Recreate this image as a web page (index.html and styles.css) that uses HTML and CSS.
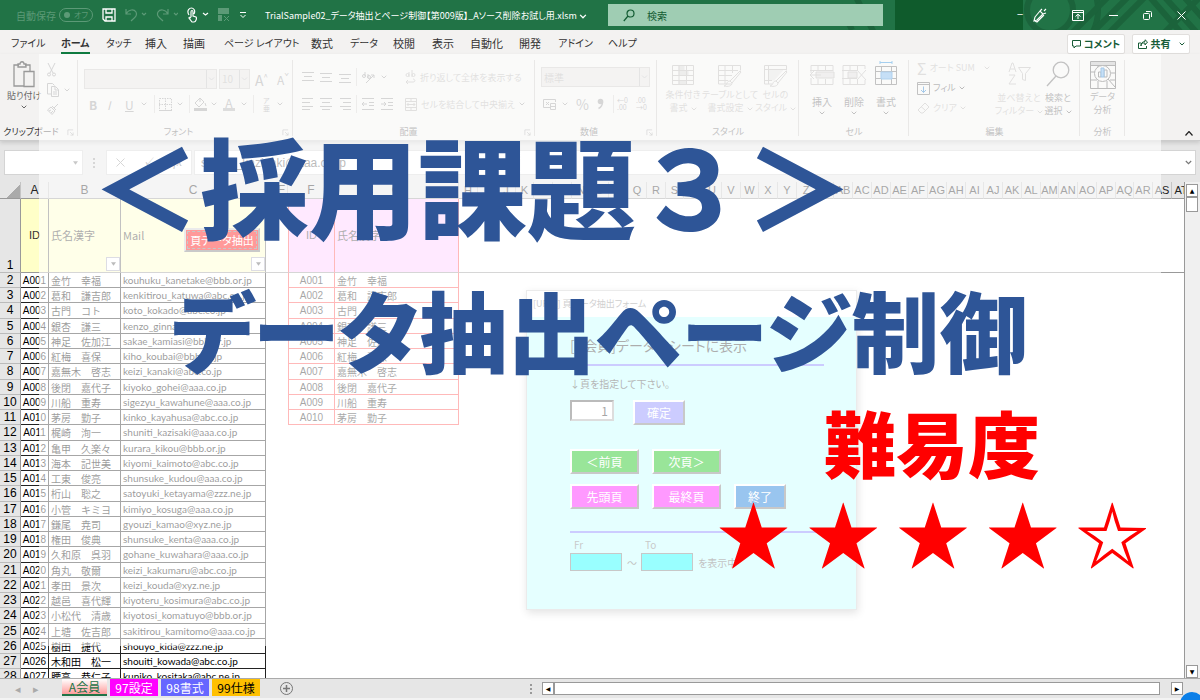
FILE: index.html
```html
<!DOCTYPE html>
<html lang="ja">
<head>
<meta charset="utf-8">
<title>採用課題３ データ抽出ページ制御</title>
<link rel="stylesheet" href="styles.css">
</head>
<body>
<svg class="defs" aria-hidden="true">
  <symbol id="chev" viewBox="0 0 6 4"><path d="M.7.7 3 3 5.3.7" fill="none" stroke="currentColor"/></symbol>
  <symbol id="launch" viewBox="0 0 8 8"><path d="M1 7V1h6M3.500 3.500 7 7M7 4v3H4" fill="none" stroke="currentColor" stroke-width=".8"/></symbol>
  <symbol id="tri" viewBox="0 0 6 4"><path d="M0 0h6L3 4z" fill="currentColor"/></symbol>
</svg>
<div class="app">
  <header class="titlebar">
    <svg class="pattern" viewBox="0 0 360 30" aria-hidden="true"><g fill="none" stroke="#1b633b" stroke-width="6"><circle cx="210" cy="10" r="23"/><circle cx="210" cy="10" r="48" /><path d="m15-5 20 40M0 5l12 25M230 35l45-45M245 40l45-45M262 40l45-45M308-5l35 40M320-8l40 44M338-10l30 34M325 32l45-45"/></g></svg>
    <div class="quick">
      <span class="dim">自動保存</span>
      <span class="dim toggle">オフ</span>
      <svg width="14" height="14" viewBox="0 0 14 14" fill="none" stroke="#fff" stroke-width="1.300"><path d="M1 1h12v12H3L1 11zM4 1v4h6V1M4 13V9h6v4"/></svg>
      <svg class="dim" width="22" height="14" viewBox="0 0 22 14" fill="none" stroke="currentColor" stroke-width="1.200"><path d="M1 1v5h5M1 6c3-5 8-5 10-2 2 4-2 6-5 9M17 5l2 2 2-2"/></svg>
      <svg class="dim" width="22" height="14" viewBox="0 0 22 14" fill="none" stroke="currentColor" stroke-width="1.200"><path d="M12 1v5H7M12 6C9 1 4 1 2 4c-2 4 2 6 5 9M18 5l2 2 2-2"/></svg>
      <svg width="22" height="16" viewBox="0 0 22 16" fill="none" stroke="#fff" stroke-width="1.200"><path d="M2 8C-1 3 3 1 4.500 1S9 3 7 7M4 10V5c0-2 2-2 2 0v4l3 1c1 1 0 5-2 5H5L2 11c0-1 1-1 2 0M16 6l2.500 2L21 6"/></svg>
      <svg class="dim" width="12" height="14" viewBox="0 0 12 14"><path d="M0 0h11v6H0zM0 7h4v6H0z" fill="currentColor"/><path d="m6 8 5 5m0-5-5 5" stroke="currentColor"/></svg>
      <svg width="8" height="8" viewBox="0 0 8 8" fill="none" stroke="#fff"><path d="M1 1.500h6M1.500 4 4 6.500 6.500 4"/></svg>
    </div>
    <div class="filename">TrialSample02_データ抽出とページ制御【第009版】_Aソース削除お試し用.xlsm <svg width="8" height="5"><use href="#chev"/></svg></div>
    <label class="search"><svg width="12" height="13" viewBox="0 0 12 13" fill="none" stroke="#135c33" stroke-width="1.200"><circle cx="7.500" cy="4.500" r="3.500"/><path d="M5 7 .8 12"/></svg><input type="text" aria-label="検索" placeholder="検索"></label>
    <div class="account">−</div>
    <div class="winbtns">
      <button aria-label="ペン"><svg width="14" height="15" viewBox="0 0 14 15" fill="none" stroke="#fff" stroke-width="1.100"><path d="m2 9 5-6 3 3-6 6-3 1zM7 3l2-2M10 6l3-1M2 13l2 1 7-7M11 3l2-2"/></svg></button>
      <button aria-label="リボン表示"><svg width="12" height="11" viewBox="0 0 12 11" fill="none" stroke="#fff"><path d="M.5.5h11v10H.5zM.5 2.500h11M6 9V4.500M3.500 6.500 6 4.200l2.500 2.300"/></svg></button>
      <button aria-label="最小化"><svg width="9" height="9" viewBox="0 0 9 9"><path d="M0 4.500h9" stroke="#fff"/></svg></button>
      <button aria-label="元に戻す"><svg width="9" height="9" viewBox="0 0 9 9" fill="none" stroke="#fff"><rect x=".5" y="2.500" width="6" height="6" rx="1"/><path d="M3 .5h4.500q1 0 1 1V6"/></svg></button>
      <button aria-label="閉じる"><svg width="9" height="9" viewBox="0 0 9 9"><path d="m.5.5 8 8m0-8-8 8" stroke="#fff"/></svg></button>
    </div>
  </header>

  <nav class="tabs">
    <a href="#" class="kana">ファイル</a><a href="#" class="active kana">ホーム</a><a href="#" class="kana">タッチ</a><a href="#">挿入</a><a href="#">描画</a><a href="#" class="kana">ページ レイアウト</a><a href="#">数式</a><a href="#" class="kana">データ</a><a href="#">校閲</a><a href="#">表示</a><a href="#">自動化</a><a href="#">開発</a><a href="#" class="kana">アドイン</a><a href="#" class="kana">ヘルプ</a>
    <div class="tabactions">
      <button><svg width="9" height="9" viewBox="0 0 9 9" fill="none" stroke="currentColor"><path d="M.5.500h8v5.500H4L2 8V6H.5z"/></svg>コメント</button>
      <button><svg width="10" height="10" viewBox="0 0 10 10" fill="none" stroke="currentColor"><path d="M3 4H.5v5.500h8V7M3 7c0-3 2-3 4-3v2l2.500-3L7 .8v1.700C4 3 3 4 3 7z"/></svg>共有 <svg class="gap" width="6" height="4"><use href="#chev"/></svg></button>
    </div>
  </nav>

  <section class="ribbon">
    <div class="group g-clip">
      <div class="gbody">
        <button class="big on"><svg width="22" height="27" viewBox="0 0 22 27" fill="none" stroke="#999" stroke-width="1.300"><path d="M11 25H1V4h5M12 4h5v6M5 3h2c0-3 4-3 4 0h2v3H5zM11 10.500h10v15H11z"/></svg><span>貼り付け</span><svg width="6" height="4"><use href="#chev"/></svg></button>
        <div class="stack3">
          <svg width="9" height="14" viewBox="0 0 9 14" fill="none" stroke="currentColor"><path d="m1 0 5 10M8 0 3 10"/><circle cx="2" cy="11.500" r="1.500"/><circle cx="7" cy="11.500" r="1.500"/></svg>
          <span><svg width="12" height="14" viewBox="0 0 12 14" fill="none" stroke="currentColor"><path d="M4 11H.5V.5h5l2 2M4.500 3.500h4l3 3v7h-7zM8 4v3h3M6 9h4M6 11h4"/></svg> <svg width="6" height="4"><use href="#chev"/></svg></span>
          <svg width="12" height="12" viewBox="0 0 12 12" fill="none" stroke="currentColor"><path d="m11 1-4 4M5 3l4 4M4 4l4 4M4 4 .5 7 5 11.500 8 8M2 8l2-1M4 10l2-2"/></svg>
        </div>
      </div>
      <div class="glabel on">クリップボード<svg width="7" height="7"><use href="#launch"/></svg></div>
    </div>
    <div class="group g-font">
      <div class="row r1"><select aria-label="フォント" disabled><option></option></select><select aria-label="サイズ" disabled><option>10</option></select><span class="sz">A<sup>^</sup></span><span class="sz sm">A<sup>ˇ</sup></span></div>
      <div class="row r2"><b>B</b><i>I</i><u>U</u><svg width="6" height="4"><use href="#chev"/></svg><hr><svg width="13" height="13" viewBox="0 0 13 13" fill="none" stroke="currentColor"><path d="M.5.5h12v12H.5zM6.500 0v13M0 6.500h13" stroke-dasharray="1.500 1"/><path d="M0 12.500h13"/></svg><svg width="6" height="4"><use href="#chev"/></svg><hr><svg width="13" height="14" viewBox="0 0 13 14" fill="none" stroke="currentColor"><path d="m6 1-5 5 4 4 5-5-4-4v4M11 6l1 3"/><path d="M0 12.500h13" stroke-width="3"/></svg><svg width="6" height="4"><use href="#chev"/></svg><span class="fc">A</span><svg width="6" height="4"><use href="#chev"/></svg><hr><span class="ruby">ア<br>亜</span><svg width="6" height="4"><use href="#chev"/></svg></div>
      <div class="glabel launch">フォント<svg width="7" height="7"><use href="#launch"/></svg></div>
    </div>
    <div class="group g-align">
      <div class="row r1"><svg width="12" height="12" viewBox="0 0 12 12" stroke="currentColor"><path d="M0 1.500h12M2 5.500h8M0 9.500h12"/></svg><svg width="12" height="12" viewBox="0 0 12 12" stroke="currentColor"><path d="M0 2.500h12M2 6.500h8M0 10.500h12"/></svg><svg width="12" height="12" viewBox="0 0 12 12" stroke="currentColor"><path d="M0 3.500h12M2 7.500h8M0 11.500h12"/></svg><hr><svg width="13" height="13" viewBox="0 0 13 13" fill="none" stroke="currentColor"><path d="M4 12 12 4M9 4h3v3M3 1v4M6 3v4"/><circle cx="2" cy="5" r="1.500"/><circle cx="7" cy="6" r="1.500"/></svg><svg width="6" height="4"><use href="#chev"/></svg><span class="wide"><svg width="11" height="14" viewBox="0 0 11 14" fill="none" stroke="currentColor"><path d="M4 2v5M7 0v7M1 12h7c3 0 2-3 0-3M3 10l-2 2 2 2"/><circle cx="2.500" cy="5" r="1.500"/><circle cx="8.500" cy="5" r="1.500"/></svg> 折り返して全体を表示する</span></div>
      <div class="row r2"><svg width="12" height="12" viewBox="0 0 12 12" stroke="currentColor"><path d="M0 .5h11M0 4.500h8M0 8.500h11M0 11.500h8"/></svg><svg width="12" height="12" viewBox="0 0 12 12" stroke="currentColor"><path d="M0 .5h12M2 4.500h8M0 8.500h12M2 11.500h8"/></svg><svg width="12" height="12" viewBox="0 0 12 12" stroke="currentColor"><path d="M1 .5h11M4 4.500h8M1 8.500h11M4 11.500h8"/></svg><hr><svg width="12" height="12" viewBox="0 0 12 12" fill="none" stroke="currentColor"><path d="M0 .5h12M7 4.500h5M7 7.500h5M0 11.500h12M5 6H0m2-2L0 6l2 2"/></svg><svg width="12" height="12" viewBox="0 0 12 12" fill="none" stroke="currentColor"><path d="M0 .5h12M7 4.500h5M7 7.500h5M0 11.500h12M0 6h5M3 4l2 2-2 2"/></svg><span class="wide"><svg width="12" height="13" viewBox="0 0 12 13" fill="none" stroke="currentColor"><path d="M.5.5h11v12H.5zM0 3.500h12M0 9.500h12M6 0v3M6 10v3M2 6.500h8M3.500 5 2 6.500 3.500 8M8.500 5 10 6.500 8.500 8"/></svg> セルを結合して中央揃え</span><svg width="6" height="4"><use href="#chev"/></svg></div>
      <div class="glabel launch">配置<svg width="7" height="7"><use href="#launch"/></svg></div>
    </div>
    <div class="group g-num">
      <div class="row r1"><select aria-label="表示形式" disabled><option>標準</option></select></div>
      <div class="row r2"><svg width="14" height="12" viewBox="0 0 14 12" fill="none" stroke="currentColor"><path d="M8 9.500H.5v-8h12V4M3 4l3 3M6 4 3 7M7.500 5.500h5v6h-5zM7 8.500h6"/></svg><svg width="6" height="4"><use href="#chev"/></svg><span class="pct">%</span><svg width="7" height="12" viewBox="0 0 7 12"><circle cx="3.500" cy="3.500" r="2.800" fill="currentColor"/><path d="M5.500 4c0 3-1 5-4 6.500" fill="none" stroke="currentColor" stroke-width="1.500"/></svg><hr><span class="dec">←0<br>.00</span><span class="dec">.00<br>→0</span></div>
      <div class="glabel launch">数値<svg width="7" height="7"><use href="#launch"/></svg></div>
    </div>
    <div class="group g-style">
      <div class="gbody">
        <button class="big"><svg width="23" height="23" viewBox="0 0 23 23" fill="none" stroke="currentColor"><path d="M.5 1.500h21v19H.5zM7 1v20M14.500 1v20M0 6.500h22M0 11.500h22M0 16.500h22"/><path d="M7 2h5v4H7zM7 7h9v4H7zM7 17h7v3H7z" fill="currentColor" opacity=".5"/></svg><span>条件付き<br>書式<svg width="6" height="4"><use href="#chev"/></svg></span></button>
        <button class="big"><svg width="24" height="23" viewBox="0 0 24 23" fill="none" stroke="currentColor"><path d="M13 20H.5V1.500h22v5M7 1v19M14.500 1v8M0 6.500h20M0 11.500h14M0 16.500h10M22 7 12 17l2 2 9-11zM12 17c-4 0-2 4-6 5 4 1 8 0 8-3"/></svg><span>テーブルとして<br>書式設定<svg width="6" height="4"><use href="#chev"/></svg></span></button>
        <button class="big"><svg width="24" height="23" viewBox="0 0 24 23" fill="none" stroke="currentColor"><path d="M8 20H.5V1.500h22v5M4.500 1v19M0 5.500h22M0 16.500h8M22 7 12 17l2 2 9-11zM12 17c-4 0-2 4-6 5 4 1 8 0 8-3"/><path d="M5 6h14l-9 10H5z" fill="currentColor" opacity=".3"/></svg><span>セルの<br>スタイル<svg width="6" height="4"><use href="#chev"/></svg></span></button>
      </div>
      <div class="glabel">スタイル</div>
    </div>
    <div class="group g-cell">
      <div class="gbody">
        <button class="big mid"><svg class="off" width="25" height="23" viewBox="0 0 25 23" fill="none" stroke="currentColor"><path d="M1 9V1.500h22V7M1 14v6.500h22V15M8 1v6M15.500 1v6M8 15v6M15.500 15v6M0 6.500h23"/><path d="M6 8h18v6H6z" fill="currentColor" fill-opacity=".4"/><path d="M11 11H0m4-4-4 4 4 4"/></svg><span>挿入</span><svg width="6" height="4"><use href="#chev"/></svg></button>
        <button class="big mid"><svg class="off" width="25" height="23" viewBox="0 0 25 23" fill="none" stroke="currentColor"><path d="M1 20.500V1.500h22V5M1 20.500h22V16M8 1v6M15.500 1v6M8 15v6M15.500 15v6M0 6.500h15M0 14.500h15M15 6l9 10M24 6l-9 10"/><path d="M6 8h9v6H6z" fill="currentColor" fill-opacity=".4"/></svg><span>削除</span><svg width="6" height="4"><use href="#chev"/></svg></button>
        <button class="big mid"><svg width="24" height="25" viewBox="0 0 24 25" fill="none" stroke="#666"><path d="M1.500 5.500h21v18h-21zM7.500 5v19M17.500 5v19M1 10.500h22M1 17.500h22"/><path d="M7 11h11v7H7z" fill="#70b0e8" stroke="#3a8dd4"/><path d="M6 1.500h12M6 0v3M18 0v3" stroke="#1e88d8"/></svg><span>書式</span><svg width="6" height="4"><use href="#chev"/></svg></button>
      </div>
      <div class="glabel">セル</div>
    </div>
    <div class="group g-edit">
      <div class="gbody">
        <div class="lines"><span><em>Σ</em> オート SUM <svg class="gap" width="6" height="4"><use href="#chev"/></svg></span><span class="dark"><svg width="13" height="13" viewBox="0 0 13 13" fill="none" stroke="#666"><path d="M.5.500h12v12H.5zM0 2.500h13"/><path d="M6.500 4.500v6M4 8l2.500 2.500L9 8" stroke="#1e78c8"/></svg> フィル <svg width="6" height="4"><use href="#chev"/></svg></span><span><svg width="13" height="12" viewBox="0 0 13 12" fill="none" stroke="currentColor"><path d="m8 1 4 4-6 6H4L1 8zM4 4.500l4.500 4"/></svg> クリア <svg width="6" height="4"><use href="#chev"/></svg></span></div>
        <button class="big"><svg width="23" height="25" viewBox="0 0 23 25" fill="none" stroke="currentColor"><path d="m1 11 3-9h1l3 9M2 8h5M1 14h6L1 23h7M10.500 6.500h12l-5 6v7l-3-1v-6z"/></svg><span>並べ替えと<br>フィルター<svg width="6" height="4"><use href="#chev"/></svg></span></button>
        <button class="big on"><svg width="24" height="27" viewBox="0 0 24 27" fill="none" stroke="#666" stroke-width="1.300"><circle cx="15" cy="9" r="7.800"/><path d="M10 15 1 25"/></svg><span>検索と<br>選択<svg width="6" height="4"><use href="#chev"/></svg></span></button>
      </div>
      <div class="glabel">編集</div>
    </div>
    <div class="group g-data">
      <div class="gbody"><button class="big on"><svg width="26" height="28" viewBox="0 0 26 28" fill="none" stroke="#555"><path d="M.5.500h25v27H.5zM0 4.500h25M0 11h5M0 19h7M8 5v2M8 20v7M17 20v7M25 12h-4M25 19h-5"/><path d="M1 2.500h24" stroke="#bbb" stroke-width="3"/><circle cx="12.500" cy="12.500" r="8" fill="#f3f2f1"/><path d="m18 18 7 8M8.500 16v-5h2.500v5zM14 16V9h3v7z"/><path d="M11 16V7h3v9z" fill="#70b0e8" stroke="#1e78c8"/></svg><span>データ<br>分析</span></button></div>
      <div class="glabel">分析</div>
    </div>
    <button class="collapse" aria-label="リボンを折りたたむ"><svg width="8" height="5" viewBox="0 0 8 5" fill="none" stroke="#222" stroke-width="1.200"><path d="m.5 4.500 3.500-4 3.500 4"/></svg></button>
  </section>

  <section class="formula">
    <div class="namebox"><svg width="5" height="4"><use href="#tri"/></svg></div>
    <span class="dots"></span>
    <div class="fx"><svg width="9" height="9" viewBox="0 0 9 9"><path d="m.5.5 8 8m0-8-8 8" stroke="#999"/></svg><span>✓</span><i>fx</i></div>
    <label class="field"><input type="text" aria-label="数式" value="shuniti_kazisaki@aaa.co.jp"><svg width="7" height="5"><use href="#chev"/></svg></label>
  </section>

  <main class="work">
    <div class="sheet">
      <table class="cells">
        <thead><tr id="letters"></tr></thead>
        <tbody id="rows"></tbody>
      </table>
    </div>
    <div class="vscroll"><button aria-label="上へ">▲</button><div class="thumb"></div><button aria-label="下へ">▼</button></div>
  </main>

  <footer class="bottom">
    <div class="nav"><span>◂</span><span>▸</span></div>
    <div class="sheettabs"><button class="t1">A会員</button><button class="t2">97設定</button><button class="t3">98書式</button><button class="t4">99仕様</button></div>
    <button class="plus" aria-label="新しいシート"><svg width="13" height="13" viewBox="0 0 13 13" fill="none" stroke="#777"><circle cx="6.500" cy="6.500" r="6"/><path d="M6.500 3v7M3 6.500h7" stroke-width="1.500"/></svg></button>
    <span class="dots"></span>
    <div class="hscroll"><button aria-label="左へ">◀</button><div class="track"></div><button aria-label="右へ">▶</button></div>
    <div class="badge"></div>
  </footer>

  <form class="dialog">
    <div class="dtitle">[UF01] 頁データ抽出フォーム</div>
    <div class="dbody">
      <h2>[A会員]データをシートに表示</h2>
      <label for="page">↓頁を指定して下さい。</label>
      <div class="drow first"><input id="page" type="text" value="1"><button type="button" class="lav">確定</button></div>
      <div class="drow keys"><button type="button" class="grn">＜前頁</button><button type="button" class="grn">次頁＞</button></div>
      <div class="drow keys"><button type="button" class="mag">先頭頁</button><button type="button" class="mag">最終頁</button><button type="button" class="blu">終了</button></div>
      <div class="range"><label for="fr">Fr</label><span></span><label for="to">To</label><span></span><input id="fr" type="text"><span>～</span><input id="to" type="text"><span>を表示中</span></div>
    </div>
  </form>

  <div class="veil"></div>
  <div class="banner">
    <h1><span class="l1">＜採用課題３＞</span><span class="l2">データ抽出ページ制御</span></h1>
    <p class="level">難易度</p>
    <p class="stars">★ ★ ★ ★ ☆</p>
  </div>
</div>
<script src="script.js"></script>
</body>
</html>
```
FILE: script.js
```js
const members = [
  ["金竹　幸福", "kouhuku_kanetake@bbb.or.jp"],
  ["葛和　謙吉郎", "kenkitirou_katuwa@abc.co.jp"],
  ["古門　コト", "koto_kokado@abc.co.jp"],
  ["銀杏　謙三", "kenzo_ginnan@aaa.co.jp"],
  ["神足　佐加江", "sakae_kamiasi@bbb.or.jp"],
  ["紅梅　喜保", "kiho_koubai@bbb.or.jp"],
  ["嘉無木　啓志", "keizi_kanaki@abc.co.jp"],
  ["後閉　嘉代子", "kiyoko_gohei@aaa.co.jp"],
  ["川船　重寿", "sigezyu_kawahune@aaa.co.jp"],
  ["茅房　勤子", "kinko_kayahusa@abc.co.jp"],
  ["梶崎　洵一", "shuniti_kazisaki@aaa.co.jp"],
  ["亀甲　久楽々", "kurara_kikou@bbb.or.jp"],
  ["海本　記世美", "kiyomi_kaimoto@abc.co.jp"],
  ["工東　俊亮", "shunsuke_kudou@aaa.co.jp"],
  ["桁山　聡之", "satoyuki_ketayama@zzz.ne.jp"],
  ["小管　キミヨ", "kimiyo_kosuga@aaa.co.jp"],
  ["鎌尾　尭司", "gyouzi_kamao@xyz.ne.jp"],
  ["権田　俊典", "shunsuke_kenta@aaa.co.jp"],
  ["久和原　呉羽", "gohane_kuwahara@aaa.co.jp"],
  ["角丸　敬爾", "keizi_kakumaru@abc.co.jp"],
  ["孝田　景次", "keizi_kouda@xyz.ne.jp"],
  ["越邑　喜代輝", "kiyoteru_kosimura@abc.co.jp"],
  ["小松代　清歳", "kiyotosi_komatuyo@bbb.or.jp"],
  ["上塘　佐吉郎", "sakitirou_kamitomo@aaa.co.jp"],
  ["樹田　捷代", "shouyo_kida@zzz.ne.jp"],
  ["木和田　松一", "shouiti_kowada@abc.co.jp"],
  ["腰高　恭仁子", "kuniko_kositaka@abc.ne.jp"]
];

const columnName = n => (n > 26 ? String.fromCharCode(64 + Math.floor((n - 1) / 26)) : "") + String.fromCharCode(65 + (n - 1) % 26);
const memberId = n => "A" + String(n).padStart(3, "0");

let head = '<th class="corner"></th>';
for (let n = 1; n <= 46; n++) {
  head += `<th class="${n < 8 ? "c" + n : n % 4 === 3 ? "narrow" : "std"}">${columnName(n)}</th>`;
}
document.getElementById("letters").innerHTML = head;

const arrow = '<button class="filter" aria-label="フィルター"><svg width="5" height="4"><use href="#tri"/></svg></button>';
let body = `<tr class="r-head"><th>1</th><td class="src id">ID</td><td class="src">氏名漢字${arrow}</td><td class="src">Mail<button class="extract">頁データ抽出</button>${arrow}</td><td></td><td></td><td class="out id">ID</td><td class="out">氏名漢字</td><td colspan="39"></td></tr>`;
members.forEach(([name, mail], i) => {
  const id = memberId(i + 1);
  const copy = i < 10 ? `<td class="res id">${id}</td><td class="res">${name}</td>` : "<td></td><td></td>";
  body += `<tr><th>${i + 2}</th><td class="mem id">${id}</td><td class="mem">${name}</td><td class="mem mail">${mail}</td><td></td><td></td>${copy}<td colspan="39"></td></tr>`;
});
document.getElementById("rows").innerHTML = body;
```
FILE: styles.css
```css
* { box-sizing: border-box; }
body { margin: 0; font-family: "Noto Sans CJK JP", sans-serif; font-size: 11px; color: #333; }
.app { position: relative; display: flex; flex-direction: column; height: 100vh; overflow: hidden; background: #e6e6e6; }
.defs { position: absolute; width: 0; height: 0; }
button { font: inherit; color: inherit; background: none; border: 0; padding: 0; }
input, select { font: inherit; color: inherit; border-radius: 0; }
svg { flex: none; }

/* title bar */
.titlebar { position: relative; display: flex; align-items: center; height: 30px; flex: none; background: #217346; color: #fff; font-feature-settings: "palt"; }
.pattern { position: absolute; right: 0; top: 0; width: 360px; height: 30px; }
.quick { display: flex; align-items: center; gap: 9px; width: 265px; padding-left: 16px; font-size: 10px; white-space: nowrap; }
.quick .dim { color: #5c9a77; }
.quick .dim:first-child { margin-right: -6px; }
.toggle { display: flex; align-items: center; gap: 4px; height: 14px; padding: 0 4px; border: 1px solid; border-radius: 7px; font-size: 8px; line-height: 12px; }
.toggle::before { content: ""; width: 6px; height: 6px; border-radius: 50%; background: currentColor; }
.filename { width: 343px; white-space: nowrap; font-size: 9px; }
.search { position: relative; display: flex; align-items: center; gap: 12px; width: 275px; height: 22px; padding-left: 15px; background: #9fcdb3; font-size: 10px; }
.search input { width: 200px; border: 0; background: none; padding: 0; outline: 0; }
.search input::placeholder { color: #135c33; opacity: 1; }
.account { position: relative; width: 128px; height: 30px; margin-left: 12px; background: #0f5b2c; text-align: right; line-height: 28px; }
.winbtns { position: relative; flex: 1; display: flex; align-items: center; justify-content: space-between; padding: 0 14px 0 10px; }
.winbtns button { display: flex; }

/* tab strip */
.tabs { position: relative; display: grid; grid-template-columns: 50px 45px 39px 38px 41px 87px 39px 43px 39px 38px 49px 39px 50px 40px 1fr; height: 24px; flex: none; padding-left: 11px; background: #f3f2f1; font-feature-settings: "palt"; line-height: 26px; }
.tabs a { color: #333; text-decoration: none; white-space: nowrap; justify-self: start; }
.tabs .kana { font-size: 10px; }
.tabs .active { font-weight: 700; border-bottom: 2px solid #107c41; line-height: 26px; height: 24px; }
.tabactions { display: flex; justify-content: flex-end; align-items: center; gap: 7px; padding: 2px 10px 0 0; }
.tabactions button { display: flex; align-items: center; justify-content: center; gap: 3px; width: 58px; height: 20px; background: #fff; border: 1px solid #e1dfdd; border-radius: 2px; color: #185c37; font-weight: 700; line-height: 18px; font-size: 10px; white-space: nowrap; }
.tabactions .gap { margin-left: 5px; }

/* ribbon */
.ribbon { position: relative; display: flex; height: 87px; flex: none; background: #f3f2f1; color: #b4b2b0; font-size: 9px; font-feature-settings: "palt"; border-bottom: 1px solid #ccc; box-shadow: 0 2px 4px #0002; }
.group { position: relative; display: flex; flex-direction: column; flex: none; padding: 7px 0 1px; white-space: nowrap; }
.group::after { content: ""; position: absolute; right: 0; top: 6px; bottom: 4px; width: 1px; background: #c8c6c4; }
.gbody { display: flex; flex: 1; }
.glabel { display: flex; align-items: center; justify-content: center; margin-top: auto; height: 14px; color: #666; line-height: 14px; }
.glabel svg { position: absolute; right: 4px; color: #999; }
.glabel.launch { padding-right: 20px; }
.glabel.on { color: #333; padding-right: 16px; }
.big { display: flex; flex-direction: column; align-items: center; line-height: 13px; text-align: center; }
.big > svg:first-child { margin-bottom: 1px; }
.big span svg { margin-left: 3px; vertical-align: middle; }
.big > span + svg { margin-top: 3px; }
.on, .mid { color: #666; }
.off { color: #b4b2b0; }
.row { display: grid; align-items: center; justify-content: start; }
.row.r1 { height: 20px; margin-top: 6px; }
.row.r2 { height: 20px; margin-top: 7px; }
.row hr { width: 1px; height: 18px; margin: 0; border: 0; background: #d2d0ce; }
.row select { appearance: none; height: 20px; width: 100%; border: 1px solid #c8c6c4; color: #b4b2b0; opacity: 1; padding: 0 2px; font-size: 10px; background: #e3e1df url("data:image/svg+xml,%3Csvg xmlns='http://www.w3.org/2000/svg' width='10' height='18'%3E%3Cpath d='M.5 0v18M3 7.500 5.500 10 8 7.500' fill='none' stroke='%23bbb'/%3E%3C/svg%3E") right center no-repeat; }
.g-clip { width: 78px; }
.g-clip .gbody { padding-left: 7px; gap: 6px; }
.stack3 { display: flex; flex-direction: column; gap: 6px; padding-top: 2px; color: #999; }
.stack3 > span { display: flex; align-items: center; gap: 5px; }
.g-font { width: 215px; padding-left: 6px; }
.g-font .r1 { grid-template-columns: 133px 31px 20px 20px; column-gap: 2px; }
.g-font .r2 { grid-template-columns: 18px 18px 16px 13px 5px 18px 12px 5px 17px 12px 18px 12px 10px 14px 6px; padding-left: 5px; font-size: 12px; color: #999; }
.sz { padding-left: 3px; font-size: 14px; line-height: 20px; color: #999; }
.sz.sm { font-size: 12px; }
.sz sup { font-size: 8px; }
.fc { width: 12px; height: 14px; line-height: 11px; text-align: center; border-bottom: 3px solid #aaa; }
.ruby { font-size: 7px; line-height: 8px; }
.g-align { width: 242px; padding-left: 9px; color: #999; }
.g-align .r1, .g-align .r2 { grid-template-columns: 18px 19px 17px 6px 19px 24px 114px 6px; }
.g-align .wide { display: flex; align-items: center; gap: 4px; color: #b4b2b0; }
.g-num { width: 122px; padding-left: 6px; }
.g-num .r1 { grid-template-columns: 109px; }
.g-num .r2 { grid-template-columns: 19px 14px 21px 16px 4px 19px 14px; padding-left: 2px; color: #999; }
.pct { font-size: 14px; line-height: 18px; }
.dec { font-size: 7px; line-height: 7px; }
.g-style { width: 142px; }
.g-style .gbody { display: grid; grid-template-columns: 46px 48px 43px; justify-items: center; padding: 3px 0 0 3px; }
.g-cell { width: 110px; }
.g-cell .gbody { justify-content: space-between; padding: 3px 10px 0; }
.g-cell .big { height: 51px; width: 26px; font-size: 10px; }
.g-cell .big > span { margin-top: auto; }
.g-cell .big:last-child { margin-top: -3px; height: 54px; }
.g-edit { width: 171px; }
.g-edit .gbody { display: grid; grid-template-columns: 84px 42px 36px; padding-left: 5px; }
.g-edit .big { height: 56px; }
.g-edit .big span { margin-top: auto; }
.g-edit .big > svg { margin-bottom: 0; }
.lines { display: flex; flex-direction: column; gap: 6px; line-height: 14px; padding-left: 3px; }
.lines > span { display: flex; align-items: center; gap: 3px; height: 14px; }
.lines em { font-style: normal; font-size: 16px; }
.lines .gap { margin-left: 6px; }
.lines .dark { color: #555; }
.g-data { width: 45px; }
.g-data .gbody { justify-content: center; }
.collapse { margin: auto 7px 4px auto; display: flex; }

/* formula bar */
.formula { display: flex; align-items: center; height: 41px; flex: none; padding: 2px 4px 0; color: #777; }
.formula > div, .field { height: 25px; background: #fff; border: 1px solid #d4d4d4; }
.namebox { display: flex; align-items: center; justify-content: flex-end; width: 79px; padding-right: 4px; }
.dots { width: 2px; height: 10px; background: repeating-linear-gradient(#999 0 2px, transparent 2px 4px); }
.formula .dots { margin: 0 11px 0 10px; }
.fx { display: flex; align-items: center; justify-content: space-between; width: 86px; padding: 0 9px; font-family: "Liberation Serif", serif; font-size: 12px; }
.field { display: flex; align-items: center; flex: 1; margin-left: 2px; padding-right: 3px; }
.field input { flex: 1; border: 0; outline: 0; padding: 0 6px; font: 12px "Liberation Sans", sans-serif; color: #555; }

/* worksheet */
.work { display: flex; flex: 1; min-height: 0; }
.sheet { flex: 1; min-width: 0; overflow: hidden; background: #fff; border-right: 1px solid #999; }
.cells { table-layout: fixed; border-collapse: separate; border-spacing: 0; width: 1190px; font-size: 10px; color: #000; }
.cells th, .cells td { padding: 0; white-space: nowrap; overflow: hidden; }
.cells thead th { height: 17px; background: #e6e6e6; font: 12px/16px "Liberation Sans", sans-serif; border-right: 1px solid #c4c4c4; border-bottom: 1px solid #999; color: #222; }
.cells thead .corner { width: 21px; background: linear-gradient(135deg, #e6e6e6 62%, #aaa 62%); }
.c1 { width: 28px; } .c2 { width: 72px; } .c3 { width: 145px; } .c4 { width: 10px; } .c5 { width: 12px; } .c6 { width: 47px; } .c7 { width: 124px; }
.std { width: 19px; } .narrow { width: 18px; }
.cells thead th:nth-child(n+9) { font-size: 11px; }
.cells tbody tr { height: 15px; }
.cells tbody tr:nth-child(4n) { height: 16px; }
.cells tbody th { background: #e6e6e6; border-right: 1px solid #999; border-bottom: 1px solid #bbb; font: 12px/13px "Liberation Sans", sans-serif; }
.cells tbody td { line-height: 13px; }
.cells tbody .r-head { height: 74px; }
.r-head th { vertical-align: bottom; }
.r-head td { position: relative; border-bottom: 1px solid #999; color: #333; font-size: 11px; }
.src { background: #ffffc8; border-right: 1px solid #666; }
.src:not(.id), .out:not(.id), .mem:not(.id), .res:not(.id) { padding-left: 2px; }
.out { background: #ffc8ff; border-right: 1px solid #ff5050; }
.out.id { border-left: 1px solid #ff5050; }
.id { text-align: center; font-family: "Liberation Sans", sans-serif; }
.mem { border-right: 1px solid #222; border-bottom: 1px solid #222; }
.mail { font-family: Lato, sans-serif; }
.res { border-right: 1px solid #ff5050; border-bottom: 1px solid #ff5050; color: #222; }
.res.id { border-left: 1px solid #ff5050; }
.filter { position: absolute; right: 0; bottom: 1px; width: 14px; height: 14px; display: flex; align-items: center; justify-content: center; background: #fff; border: 1px solid #aab; color: #555; }
.extract { position: absolute; right: 5px; top: 29px; width: 76px; height: 24px; background: #f00; color: #fff; border: 2px outset #ccc; outline: 1px dashed #777; outline-offset: -4px; font-feature-settings: "palt"; }
.vscroll { display: flex; flex-direction: column; width: 15px; padding: 2px 2px 0 1px; background: #f0f0f0; }
.vscroll button, .hscroll button { display: flex; align-items: center; justify-content: center; width: 12px; height: 13px; flex: none; background: #fff; border: 1px solid #999; color: #000; font: 6px "DejaVu Sans", sans-serif; }
.vscroll .thumb { height: 15px; width: 12px; background: #fff; border: 1px solid #999; margin-bottom: auto; }

/* sheet tabs */
.bottom { position: relative; display: flex; height: 22px; flex: none; border-top: 1px solid #aaa; border-bottom: 2px solid #f3f3f3; }
.nav { display: flex; gap: 12px; width: 62px; padding-left: 15px; color: #aaa; line-height: 19px; }
.sheettabs { display: flex; gap: 3px; height: 17px; font-size: 12px; line-height: 15px; font-feature-settings: "palt"; }
.sheettabs button { width: 48px; color: #fff; }
.sheettabs .t1 { width: 45px; color: #217346; background: linear-gradient(#fff, #ff9c9c); border-bottom: 2px solid #217346; line-height: 14px; }
.t2 { background: #f0f; } .t3 { background: #66f; } .sheettabs .t4 { background: #ffc000; color: #000; }
.plus { display: flex; align-items: center; margin-left: 20px; }
.bottom > .dots { margin: 5px 10px 0 auto; }
.hscroll { display: flex; align-items: center; width: 641px; margin-right: 17px; }
.track { flex: 1; height: 13px; margin-right: 11px; background: #fff; border: 1px solid #999; }
.badge { position: absolute; right: -4px; top: 13px; width: 24px; height: 24px; border-radius: 50%; background: #0a7fe8; }

/* paging form window */
.dialog { position: absolute; left: 526px; top: 290px; width: 331px; background: #beffff; border: 1px solid #ccc; box-shadow: 1px 3px 8px #0004; font-size: 12px; color: #222; }
.dtitle { height: 26px; line-height: 26px; padding-left: 6px; background: #fff; color: #888; font-size: 9px; font-feature-settings: "palt"; }
.dbody { padding: 16px 32px 38px 43px; font-feature-settings: "palt"; }
.dbody h2 { margin: 0 0 10px; padding-bottom: 7px; border-bottom: 2px solid #8080ff; font-size: 14px; font-weight: 400; line-height: 24px; color: #333; }
.dbody label { display: block; line-height: 16px; color: #444; font-size: 10px; }
.drow { display: flex; gap: 13px; margin-bottom: 10px; }
.drow input { width: 44px; height: 21px; border: 2px inset #aaa; background: #fff; text-align: right; padding: 0 4px; }
.drow button { width: 69px; height: 25px; color: #fff; border: 2px solid; border-color: #fff #777 #777 #fff; font-size: 12px; line-height: 18px; }
.drow.first { gap: 19px; margin: 8px 0 24px; }
.drow .lav { width: 52px; background: #8080ff; }
.drow .grn { background: #00be00; } .drow .mag { background: #f0f; } .drow .blu { width: 52px; background: #006ed7; }
.range { display: grid; grid-template-columns: 52px 19px 52px 1fr; align-items: center; margin-top: 22px; padding-top: 4px; border-top: 2px solid #8080ff; font-size: 10px; }
.range label { padding-left: 4px; color: #777; }
.range input { width: 100%; height: 18px; background: #0ff; border: 1px solid #777; }
.range span { padding-left: 5px; color: #666; }

/* white veil and headline */
.veil { position: absolute; left: 39px; right: 39px; top: 54px; bottom: 54px; background: #fff9; }
.banner { position: absolute; left: 91px; top: 105px; }
.banner h1, .banner p { margin: 0; white-space: nowrap; font-weight: 900; }
.banner h1 { color: #2e5597; }
.banner h1 span { display: block; }
.l1 { font-size: 109px; line-height: 158px; }
.l2 { font-size: 88px; line-height: 130px; padding-left: 80px; font-feature-settings: "palt"; }
.level { padding-left: 733px; font-size: 72px; line-height: 96px; color: #f00; }
.stars { padding-left: 626px; font-size: 73px; line-height: 84px; color: #f00; }
```
